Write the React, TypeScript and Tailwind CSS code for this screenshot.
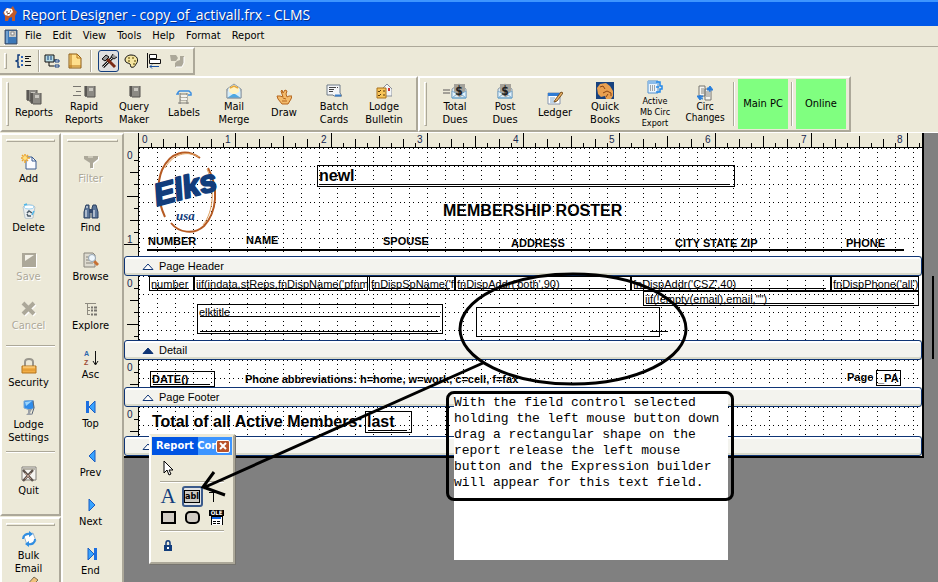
import type { ReactNode } from 'react';

const UI_FONT = "font-['DejaVu_Sans_Condensed','DejaVu_Sans',sans-serif]";
const REPORT_FONT = "font-['Liberation_Sans',sans-serif]";

interface IconProps {
  children: ReactNode;
  wide?: boolean;
}

const Icon = ({ children, wide }: IconProps) => (
  <svg
    className={wide ? 'h-4 w-6 shrink-0' : 'h-4 w-4 shrink-0'}
    viewBox={wide ? '0 0 24 16' : '0 0 16 16'}
    fill="none"
    aria-hidden="true"
  >
    {children}
  </svg>
);

const Notebook = () => (
  <g>
    <path d="M4 3h10v11H4z" fill="#77756f" />
    <path d="M6 3h8v11H6z" fill="#8c8a84" />
    <path d="M8 5h4v3H8z" fill="#c9c7c0" />
    <path d="M14 3v11H6" stroke="#55534e" />
    <path d="M3 4h3M3 6h3M3 8h3M3 10h3M3 12h3" stroke="#3c3b38" />
  </g>
);

const Envelope = ({ money }: { money?: boolean }) => (
  <g>
    <path d="M1 6l7-5 7 5v9H1z" fill="#dcebf5" stroke="#8f9aa3" />
    {money ? (
      <>
        <path d="M3 1h11v10l-5 3-6-3z" fill="#a5a29a" />
        <path d="M1 8l5 3-5 4zM15 8l-5 3 5 4z" fill="#e4f2fb" stroke="#7aa9cc" />
        <text x="8" y="12" textAnchor="middle" fontSize="12" fontWeight="bold" fill="#222">$</text>
        <path d="M1 15h14" stroke="#5da9dc" />
      </>
    ) : (
      <>
        <path d="M3 5l5-3 5 3v4l-5 3-5-3z" fill="#fff3c4" />
        <path d="M4 5l4-2 4 2" stroke="#e8a838" strokeWidth="1.5" />
        <path d="M1 8l7 4 7-4v7H1z" fill="#d5edfa" />
        <path d="M1 15l6-4h2l6 4z" fill="#4fa8e2" />
        <path d="M1 6v9h14V6" stroke="#8f9aa3" />
      </>
    )}
  </g>
);

const ReportsIcon = () => (
  <Icon>
    <g transform="translate(-3 -2)"><Notebook /></g>
    <g transform="translate(1 1)"><Notebook /></g>
  </Icon>
);

const RapidIcon = () => (
  <Icon wide>
    <path d="M1 3.5h8M4 8.5h5M1 12.5h8" stroke="#77756f" />
    <g transform="translate(9 0)"><Notebook /></g>
  </Icon>
);

const QueryIcon = () => <Icon><Notebook /></Icon>;

const LabelsIcon = () => (
  <Icon>
    <path d="M3 2h10l2 2v2h-3M3 2L1 5h2" stroke="#3d8fe0" strokeWidth="1.5" />
    <path d="M4 4v11M11 4v11M4 5h7M4 8h7M4 11h7M2 14h11" stroke="#807e78" />
    <path d="M5 6h6v2H5zM5 9h6v2H5z" fill="#f4f3ee" />
  </Icon>
);

const MailIcon = () => <Icon><Envelope /></Icon>;

const DrawIcon = () => (
  <Icon>
    <path
      d="M6 1l-1 1 2 6-3-1-3 0 1 3 4 5h6l3-5 1-3-3 0-2 1-1-3 1-3-2-1-2 3z"
      fill="#f3bb6c"
      stroke="#b5651d"
    />
    <path d="M7 9l3 1M6 12h5" stroke="#b5651d" />
  </Icon>
);

const BatchIcon = () => (
  <Icon>
    <path d="M1 2h13v8l2 3H8l-1-1H1z" fill="#f3f5f8" stroke="#6e7a87" />
    <path d="M3 4.5h7M3 6.5h5M3 8.5h4M11 4.5h1" stroke="#444" />
    <path d="M9 12.5h6" stroke="#3d7fc8" strokeWidth="2" />
  </Icon>
);

const BulletinIcon = () => (
  <Icon>
    <path d="M7 5l4-4 5 5v7H7z" fill="#f2f5f8" stroke="#8a8f96" />
    <path d="M12 5h2v3h-2z" fill="#c33" />
    <path d="M1 5h9v10H1z" fill="#f8c55a" stroke="#a8711c" />
    <path d="M2 8l1 1 2-2M2 12l1 1 2-2M7 8h2M7 12h2" stroke="#5a3b0c" />
  </Icon>
);

const TotalDuesIcon = () => (
  <Icon wide>
    <path d="M0 7h7M0 10h7" stroke="#8a8882" strokeWidth="1.5" />
    <g transform="translate(8 0)"><Envelope money /></g>
  </Icon>
);

const PostDuesIcon = () => <Icon><Envelope money /></Icon>;

const LedgerIcon = () => (
  <Icon>
    <path d="M1 4h12v11H1z" fill="#fff" stroke="#8796ad" />
    <path d="M1 4h12v3H1z" fill="#2f7bd3" />
    <path d="M3 9h5M3 11h4M3 13h6" stroke="#7aa7cf" />
    <path d="M8 11l6-8 2 1-6 8-3 1z" fill="#edb366" stroke="#79501e" />
  </Icon>
);

const QuickBooksIcon = () => (
  <svg className="h-[17px] w-[18px] shrink-0" viewBox="0 0 18 17" aria-hidden="true">
    <path d="M0 0h18v17H0z" fill="#17427f" />
    <path d="M1 6l3-4 6-1 4 3 3 5v5l-2 3h-5l-1-3-4 1-3-3z" fill="#e9a050" />
    <path d="M4 5l3-1 2 3M7 11l4-2 4 2v3M10 15l2-3" stroke="#8a4312" fill="none" />
  </svg>
);

const ExportIcon = () => (
  <Icon>
    <path d="M1 2h10v12H1z" fill="#eaf4fd" stroke="#4f8fd0" />
    <path d="M1 2h9v3H1z" fill="#8cbce9" />
    <path d="M3 7h1M5 7h1M7 7h1M3 9h1M5 9h1M7 9h1M3 11h1M5 11h1M7 11h1" stroke="#555" />
    <path d="M9 3h4v4h2v3h-2v3H9M12 8h-3" stroke="#2489ea" strokeWidth="1.5" />
  </Icon>
);

const CircIcon = () => (
  <Icon>
    <path d="M2 1h6v10H2zM8 4h6v11H8z" fill="#f5f5f0" stroke="#77756f" />
    <path d="M4 4h3M4 6h3M4 8h3M9 7h4M9 9h4M9 11h4" stroke="#8a8882" />
    <path d="M10 3c2 0 3 1 3 4M10 5l3-4 3 4zM6 14c-2 0-3-1-3-4M0 11l3 4 3-4z" fill="#287fdc" stroke="#287fdc" />
  </Icon>
);

const AddIcon = () => (
  <Icon>
    <path d="M5 3h6l4 4v8H5z" fill="#fbfcff" stroke="#395a8f" />
    <path d="M11 3v4h4" stroke="#395a8f" />
    <path d="M4 0v9M0 4h9M1 1l6 6M7 1L1 7" stroke="#eda52d" strokeWidth="1.5" />
    <circle cx="4" cy="4" r="2" fill="#ffe281" />
  </Icon>
);

const DeleteIcon = () => (
  <Icon>
    <path d="M2 4l2 11c2 1 6 1 8 0l2-11c-2-3-10-3-12 0z" fill="#e9edef" stroke="#b9c6cc" />
    <ellipse cx="8" cy="4" rx="5" ry="2" fill="#fff" stroke="#9fd3ef" />
    <path d="M6 10l2-2 3 2M10 13H7l-1-2" stroke="#4a5a66" strokeWidth="1.5" />
    <path d="M3 2l3-1M11 12l2-4" stroke="#4db6e8" strokeWidth="1.5" />
  </Icon>
);

const SaveIcon = () => (
  <Icon>
    <path d="M1 1h14v14H1z" fill="#aca899" />
    <path d="M4 3h9L4 9z" fill="#f4f2e8" />
    <path d="M15.5 2v13.5H2" stroke="#fff" />
  </Icon>
);

const CancelIcon = () => (
  <Icon>
    <path d="M3 3l11 11M14 3L3 14" stroke="#fff" strokeWidth="4" />
    <path d="M2 2l11 11M13 2L2 13" stroke="#aca899" strokeWidth="4" />
  </Icon>
);

const LockIcon = () => (
  <Icon>
    <path d="M4 8V4c0-4 8-4 8 0v4" stroke="#99968d" strokeWidth="2" />
    <path d="M1 8h14v7H1z" fill="#f2ae45" stroke="#b3731b" />
    <path d="M2 9h12" stroke="#ffdc97" />
    <path d="M2 12h12" stroke="#d9902c" />
  </Icon>
);

const LodgeIcon = () => (
  <Icon>
    <path d="M3 1l9-1 1 8-4 2-6-2z" fill="#2f8cea" stroke="#7ba9d4" />
    <path d="M4 2l7-1-6 5z" fill="#9cd5fc" />
    <path d="M7 9l4 0-2 4 3 2H5l2-2z" fill="#9ba1a8" />
    <path d="M12 1l1 7-2 6" stroke="#596573" />
  </Icon>
);

const QuitIcon = () => (
  <Icon>
    <path d="M1 1h14v13H1z" fill="#f6f5f1" stroke="#817f78" />
    <path d="M2 2h12v2H2z" fill="#b8b5aa" />
    <path d="M2 4l10 11M12 4L2 15" stroke="#5e544d" strokeWidth="2.5" />
    <path d="M4 7l6 6M10 7l-6 6" stroke="#b9988a" />
  </Icon>
);

const BulkIcon = () => (
  <Icon>
    <path d="M3 5l9-3 3 8-9 4z" fill="#fff" stroke="#9ab4cb" />
    <path d="M2 8c0-4 4-6 7-5M14 8c0 4-3 6-6 5" stroke="#2f8ee3" strokeWidth="2" />
    <path d="M8 0l4 3-4 3zM8 10l-4 3 4 3z" fill="#2f8ee3" />
  </Icon>
);

const PencilIcon = () => (
  <Icon>
    <path d="M2 14l1-4 8-9 4 3-9 9z" fill="#f0c27a" stroke="#7d6c52" />
  </Icon>
);

const FilterIcon = () => (
  <Icon>
    <path d="M2 3h14v3l-5 4v5H8v-5L2 5z" fill="#fff" />
    <path d="M1 2h14v3l-5 4v5H7V9L1 5z" fill="#aca899" />
    <path d="M5 3h5" stroke="#ece9d8" />
  </Icon>
);

const FindIcon = () => (
  <Icon>
    <path d="M3 2h3v3l1 4v6H1V9zM10 2h3l2 7v6H9V5z" fill="#5c7699" stroke="#283e5f" />
    <path d="M6 6h4v4H6z" fill="#33496c" />
    <path d="M3 7v7M11 7v7M4 3v2" stroke="#fff" />
  </Icon>
);

const BrowseIcon = () => (
  <Icon>
    <path d="M1 1h9l2 2v12H1z" fill="#dedbd0" stroke="#88857c" />
    <path d="M3 5h4M3 8h4M3 11h7" stroke="#88857c" />
    <path d="M11 9l4 4" stroke="#c77032" strokeWidth="3" />
    <circle cx="9" cy="6" r="3.5" fill="#eef6fc" stroke="#94a4b2" />
  </Icon>
);

const ExploreIcon = () => (
  <Icon>
    <path d="M2 2.5h11M4.5 3v11M5 6.5h2M5 9.5h2M5 13.5h2" stroke="#8e8b80" />
    <path d="M8 6.5h2M11 6.5h3M8 9.5h2M11 9.5h3M8 13.5h2M11 13.5h3" stroke="#77756f" strokeWidth="2" />
  </Icon>
);

const AscIcon = () => (
  <Icon>
    <text x="1" y="6" fontSize="7" fontWeight="bold" fill="#2d66ae" fontFamily="Liberation Sans">A</text>
    <text x="1" y="15" fontSize="7" fontWeight="bold" fill="#9c4934" fontFamily="Liberation Sans">Z</text>
    <path d="M12.5 1v13M10 11l2.5 4 2.5-4" stroke="#111" />
  </Icon>
);

const TopIcon = () => (
  <Icon>
    <path d="M3 2h3v12H3z" fill="#1c6fe0" />
    <path d="M12 2v12L6 8z" fill="#38a3ff" stroke="#1b5dc1" />
  </Icon>
);

const PrevIcon = () => (
  <Icon>
    <path d="M12 2v12L6 8z" fill="#38a3ff" stroke="#1b5dc1" />
  </Icon>
);

const NextIcon = () => (
  <Icon>
    <path d="M6 2v12l6-6z" fill="#38a3ff" stroke="#1b5dc1" />
  </Icon>
);

const EndIcon = () => (
  <Icon>
    <path d="M11 2h3v12h-3z" fill="#1c6fe0" />
    <path d="M5 2v12l6-6z" fill="#38a3ff" stroke="#1b5dc1" />
  </Icon>
);

interface ToolProps {
  icon?: ReactNode;
  lines: string[];
  disabled?: boolean;
}

const TopButton = ({ icon, lines }: ToolProps) => (
  <button type="button" className="flex w-[50px] shrink-0 flex-col items-center justify-center gap-px whitespace-nowrap">
    {icon}
    <span className={lines.length > 2 ? 'text-[9px] leading-[11px]' : 'text-[11px] leading-[13px]'}>
      {lines.map((line) => (
        <span key={line} className="block text-center">{line}</span>
      ))}
    </span>
  </button>
);

const SideButton = ({ icon, lines, disabled }: ToolProps) => (
  <button
    type="button"
    disabled={disabled}
    className="flex w-full shrink-0 flex-col items-center gap-0.5 pt-[9px] pr-1 pb-[9px] text-[11px] leading-[13px] disabled:text-[#aca899] disabled:[text-shadow:1px_1px_0_#fff]"
  >
    {icon}
    <span>
      {lines.map((line) => (
        <span key={line} className="block text-center">{line}</span>
      ))}
    </span>
  </button>
);

const VSep = () => <div className="mx-[3px] my-1 w-0.5 shrink-0 border-l border-r border-l-[#aca899] border-r-white" />;
const HSep = () => <div className="mx-1 h-0.5 shrink-0 border-t border-b border-t-[#aca899] border-b-white" />;
const SideGrip = () => <div className="mx-1 mt-1 h-[3px] shrink-0 border border-t-white border-l-white border-r-[#aca899] border-b-[#aca899]" />;
const TopGrip = () => <div className="my-1 ml-1 w-[3px] shrink-0 border border-t-white border-l-white border-r-[#aca899] border-b-[#aca899]" />;

const PANEL = 'border-2 border-t-white border-l-white border-r-[#aca899] border-b-[#aca899]';

const tickLength = (i: number) => {
  if (i % 8 === 0) return 14;
  if (i % 4 === 0) return 11;
  return i % 2 === 0 ? 8 : 4;
};

const HorizontalRuler = () => (
  <svg className={`block h-[15px] w-full ${REPORT_FONT}`} shapeRendering="crispEdges">
    {Array.from({ length: 65 }, (_, i) => i + 1).map((i) => (
      <rect key={i} x={15 + i * 12} y={14 - tickLength(i)} width="1" height={tickLength(i)} />
    ))}
    <rect x="14" y="14" width="100%" height="1" />
    <rect x="14" y="0" width="1" height="15" />
    {[0, 1, 2, 3, 4, 5, 6, 7, 8].map((n) => (
      <text key={n} x={n === 0 ? 18 : 5 + n * 96} y="10" fontSize="10" fill="#16264f">{n}</text>
    ))}
  </svg>
);

interface BandProps {
  label?: string;
  open?: boolean;
  heightClass: string;
  ticks: number;
  children: ReactNode;
}

const Band = ({ label, open, heightClass, ticks, children }: BandProps) => (
  <section>
    <div className={`flex ${heightClass} ${REPORT_FONT}`}>
      <svg className="block h-full w-[15px] shrink-0 bg-[#ece9d8]" shapeRendering="crispEdges">
        {Array.from({ length: ticks }, (_, i) => i + 1).map((i) => (
          <rect key={i} x={14 - tickLength(i)} y={i * 12} width={tickLength(i)} height="1" />
        ))}
        <rect x="14" width="1" height="100%" />
        <text x="3" y="11" fontSize="10" fill="#16264f">0</text>
        {ticks > 7 && <text x="3" y="95" fontSize="10" fill="#16264f">1</text>}
      </svg>
      <div className="relative flex-1 bg-white">
        <svg className="absolute inset-0 h-full w-full" shapeRendering="crispEdges">
          <rect width="100%" height="100%" fill="url(#grid-dots)" />
        </svg>
        {children}
      </div>
    </div>
    <div className="flex h-5 items-center gap-[5px] rounded-[3px] border border-[#0f3575] bg-[#f3f3ee] pl-[17px] shadow-[inset_0_2px_0_#fff,inset_0_-2px_0_#d9dacb]">
      <svg className="h-2 w-3" viewBox="0 0 12 8">
        <path d="M1 7.5h10L6 2z" fill={open ? '#0f3575' : '#fff'} stroke="#0f3575" />
      </svg>
      <span className={`text-[11px] ${REPORT_FONT}`}>{label}</span>
    </div>
  </section>
);

interface FieldProps {
  place: string;
  text?: string;
  className?: string;
  underline?: boolean;
}

const Field = ({ place, text, className = 'text-[11px] leading-[14px]', underline = true }: FieldProps) => (
  <div className={`absolute border border-black px-px whitespace-nowrap ${place} ${className}`}>
    {text}
    {underline && <span className="absolute right-1 bottom-px left-0.5 border-b border-black" />}
  </div>
);

const ElksLogo = () => (
  <svg className="absolute top-0.5 left-[13px] h-[84px] w-[70px] overflow-visible" viewBox="0 0 70 84" fill="none" role="img" aria-label="Elks usa">
    <path d="M48 8C34-2 18 2 10 20C5 32 5 50 13 67" stroke="#b65a22" strokeWidth="2" />
    <path d="M56 18C67 38 65 62 52 76C42 85 27 83 19 73" stroke="#b65a22" strokeWidth="2" />
    <path d="M47 7C35 0 21 4 13 18M55 19C63 37 62 61 51 75" stroke="#e0a261" />
    <text x="5" y="56" transform="rotate(-15 5 56)" fontFamily="Liberation Sans" fontStyle="italic" fontWeight="bold" fontSize="31" fill="#123d7c" stroke="#123d7c" strokeWidth="2" strokeLinejoin="round">Elks</text>
    <text x="24" y="70" fontFamily="Liberation Serif" fontStyle="italic" fontWeight="bold" fontSize="13" fill="#123d7c">usa</text>
  </svg>
);

const COLUMN_HEADS = [
  { text: 'NUMBER', place: 'left-[9px] top-[87px]' },
  { text: 'NAME', place: 'left-[107px] top-[86px]' },
  { text: 'SPOUSE', place: 'left-[244px] top-[87px]' },
  { text: 'ADDRESS', place: 'left-[372px] top-[89px]' },
  { text: 'CITY STATE ZIP', place: 'left-[536px] top-[89px]' },
  { text: 'PHONE', place: 'left-[707px] top-[89px]' },
];

const ReportPage = () => (
  <div className="w-[800px] border-r-2 border-b-2 border-black bg-[#ece9d8]">
    <svg className="absolute h-0 w-0">
      <defs>
        <pattern id="grid-dots" width="18" height="18" patternUnits="userSpaceOnUse">
          <path d="M0 0h1v1H0zM4 0h1v1H4zM9 0h1v1H9zM13 0h1v1h-1zM0 4h1v1H0zM0 9h1v1H0zM0 13h1v1H0z" fill="#000" />
        </pattern>
      </defs>
    </svg>
    <HorizontalRuler />

    <Band label="Page Header" heightClass="h-[108px]" ticks={8}>
      <ElksLogo />
      <Field place="left-[178px] top-[17px] h-[22px] w-[418px]" text="newl" className="text-base leading-5 font-bold" />
      <h2 className="absolute top-[53px] left-[304px] text-base leading-5 font-bold whitespace-nowrap">MEMBERSHIP ROSTER</h2>
      {COLUMN_HEADS.map(({ text, place }) => (
        <span key={text} className={`absolute text-[11px] leading-3 font-bold whitespace-nowrap ${place}`}>{text}</span>
      ))}
      <div className="absolute top-[101px] left-2 h-0.5 w-[757px] bg-black" />
    </Band>

    <Band label="Detail" open heightClass="h-16" ticks={5}>
      <Field place="left-[10px] top-0 h-[15px] w-[45px]" text="number" />
      <Field place="left-[55px] top-0 h-[15px] w-[174px]" text="iif(indata,stReps,fnDispName('pfnm" />
      <Field place="left-[230px] top-0 h-[15px] w-[86px]" text="fnDispSpName('f" />
      <Field place="left-[316px] top-0 h-[15px] w-[176px]" text="fnDispAddr('both',90)" />
      <Field place="left-[492px] top-0 h-[15px] w-[200px]" text="fnDispAddr('CSZ',40)" />
      <Field place="left-[692px] top-0 h-[15px] w-[88px]" text="fnDispPhone('all')" />
      <Field place="left-[504px] top-[15px] h-[15px] w-[276px]" text={'iif(!empty(email),email,"")'} />
      <Field place="left-[58px] top-[28px] h-[30px] w-[246px]" text="elktitle" />
      <div className="absolute top-10 left-[61px] w-[240px] border-t border-black" />
      <Field place="left-[337px] top-[31px] h-[30px] w-[184px]" underline={false} />
      <div className="absolute top-[55px] left-[511px] w-[18px] border-t border-black" />
    </Band>

    <Band label="Page Footer" heightClass="h-[27px]" ticks={2}>
      <Field place="left-[11px] top-[11px] h-4 w-[65px]" text="DATE()" className="text-[11px] leading-[14px] font-bold" />
      <span className="absolute top-3 left-[106px] text-[11px] leading-[14px] font-bold whitespace-nowrap">
        Phone abbreviations: h=home, w=work, c=cell, f=fax
      </span>
      <span className="absolute top-[10px] left-[708px] text-[11px] leading-[14px] font-bold">Page</span>
      <Field place="left-[737px] top-[10px] h-4 w-[25px]" text="_PA" className="text-[11px] leading-[14px] font-bold" underline={false} />
    </Band>

    <Band heightClass="h-[29px]" ticks={2}>
      <span className="absolute top-[5px] left-[13px] text-base leading-5 font-bold whitespace-nowrap">
        Total of all Active Members:
      </span>
      <Field place="left-[226px] top-1 h-[22px] w-[47px]" text="last" className="text-base leading-5 font-bold" />
    </Band>
  </div>
);

const ControlsPalette = () => (
  <div className="absolute top-[301px] left-[25px] w-[86px] border-2 border-t-[#ece9d8] border-l-white border-r-[#aca899] border-b-[#aca899] bg-[#ece9d8] px-px pt-px shadow-[1px_1px_0_#77756f]">
    <div className="flex h-[18px] items-center bg-[linear-gradient(90deg,#0054e3_0_58%,#3d95ff_58%)] pr-0.5 pl-1">
      <span className="flex-1 overflow-hidden text-[11px] font-bold whitespace-nowrap text-white">Report Controls</span>
      <button type="button" aria-label="Close" className="flex h-[13px] w-[14px] shrink-0 items-center justify-center rounded-[2px] border border-white bg-[#b9532b]">
        <svg className="h-2 w-2" viewBox="0 0 8 8"><path d="M1 1l6 6M7 1L1 7" stroke="#fff" strokeWidth="2" /></svg>
      </button>
    </div>
    <div className="px-1 pb-1.5">
      <button type="button" aria-label="Select" className="flex h-[26px] w-6 items-center justify-center">
        <svg className="h-4 w-4" viewBox="0 0 16 16">
          <path d="M4 1v12l3-3 2 5 2-1-2-4h4z" fill="#fff" stroke="#000" />
        </svg>
      </button>
      <HSep />
      <div className="mt-[3px] grid grid-cols-3 justify-items-center">
        <button type="button" aria-label="Label" className="h-[21px] w-[22px] font-['Liberation_Serif',serif] text-[21px] leading-[21px] text-[#123d7c]">A</button>
        <button type="button" aria-label="Field" className="flex h-[21px] w-[21px] items-center justify-center rounded-[3px] border-2 border-[#3b5a8b] bg-[#e2e3e4]">
          <span className="border border-black bg-[#ccc9c2] text-[9px] leading-[11px] font-bold">abl</span>
        </button>
        <button type="button" aria-label="Line" className="flex h-[21px] w-[22px] items-center justify-center">
          <svg className="h-4 w-4" viewBox="0 0 16 16"><path d="M1 3.5h10M5.5 4v9" stroke="#000" /></svg>
        </button>
        <button type="button" aria-label="Rectangle" className="flex h-5 w-[22px] items-center justify-center">
          <span className="h-[13px] w-[15px] border-2 border-black bg-[#d1ccc4]" />
        </button>
        <button type="button" aria-label="Rounded rectangle" className="flex h-5 w-[22px] items-center justify-center">
          <span className="h-[13px] w-[15px] rounded-[5px] border-2 border-black bg-[#d1ccc4]" />
        </button>
        <button type="button" aria-label="OLE object" className="flex h-5 w-[22px] items-center justify-center">
          <svg className="h-[15px] w-[15px]" viewBox="0 0 15 15" shapeRendering="crispEdges">
            <path d="M0 0h15v6H0z" />
            <text x="7.5" y="5" textAnchor="middle" fontSize="6" fontWeight="bold" fill="#fff">OLE</text>
            <path d="M2 6h11v9H2z" fill="#fff" stroke="#000" />
            <path d="M3 7h9v2H3z" fill="#1267e8" />
            <path d="M4 11h3M8 11h3M4 13h3M8 13h3" stroke="#000" />
          </svg>
        </button>
      </div>
      <div className="mt-[3px]"><HSep /></div>
      <button type="button" aria-label="Lock" className="mt-1 flex h-5 w-6 items-center justify-center">
        <svg className="h-3 w-2" viewBox="0 0 8 12">
          <path d="M2 6V3c0-3 4-3 4 0v3" fill="none" stroke="#123d7c" strokeWidth="1.5" />
          <path d="M0 5h8v6H0z" fill="#123d7c" />
          <path d="M3 7h2v2H3z" fill="#fff" />
        </svg>
      </button>
    </div>
  </div>
);

const Annotation = () => (
  <>
    <div className="absolute top-[261px] left-[330px] h-[166px] w-[274px] bg-white">
      <p className="pt-px font-['Liberation_Mono',monospace] text-[13px] leading-4 whitespace-pre">
        {`With the field control selected
holding the left mouse button down
drag a rectangular shape on the
report release the left mouse
button and the Expression builder
will appear for this text field.`}
      </p>
    </div>
    <div className="absolute top-[258px] left-[322px] h-[110px] w-[288px] rounded-lg border-3 border-black" />
    <svg className="pointer-events-none absolute inset-0 h-full w-full" fill="none" stroke="#000" strokeWidth="3">
      <ellipse cx="449" cy="196" rx="113" ry="55" />
      <path d="M359 230L79 355M90 339l-11 15 22 8" />
    </svg>
    <div className="absolute top-[143px] left-[808px] h-[83px] w-0.5 bg-black" />
  </>
);

const TitleBar = () => (
  <header className="flex h-[26px] shrink-0 items-center gap-1 border-t-2 border-[#3d95ff] bg-[#0058e8] pl-0.5">
    <Icon>
      <path d="M1 7l3-5 4 1 3-3 2 4 2 2-2 4v5h-3v-4l-3 1-1 3H3v-5z" fill="#c05a2a" />
      <path d="M2 6l3-4 5 1 1 3-4 4-4-1z" fill="#fff" />
      <path d="M4 6h2M8 5h1M5 8l3-1" stroke="#6c3f28" />
    </Icon>
    <h1 className="font-['Open_Sans','Noto_Sans',sans-serif] text-[14px] whitespace-nowrap text-white [text-shadow:1px_1px_0_#0b2f86]">
      Report Designer - copy_of_activall.frx - CLMS
    </h1>
  </header>
);

const MenuBar = () => (
  <nav className="flex h-5 shrink-0 items-center gap-[11px] pt-px pl-1 text-[11px]">
    <svg className="-mr-1 h-4 w-[14px] bg-white" viewBox="0 0 14 16">
      <path d="M1 1h12v14H1z" fill="#3c78b8" stroke="#3c4654" />
      <path d="M5 2h7v6H5z" fill="#c8c8c4" />
      <path d="M7 3h3v3H7z" fill="#fff" stroke="#888" />
      <path d="M3 2v12" stroke="#a8cbe8" />
    </svg>
    {['File', 'Edit', 'View', 'Tools', 'Help', 'Format', 'Report'].map((item) => (
      <button key={item} type="button">{item}</button>
    ))}
  </nav>
);

const SMALL = 'flex w-[23px] items-center justify-center';

const DesignerToolbar = () => (
  <div className={`flex h-7 w-[195px] shrink-0 ${PANEL} border-l-0`}>
    <TopGrip />
    <div className="flex py-px pl-1">
      <button type="button" aria-label="Tab order" className={SMALL}>
        <Icon>
          <path d="M5 2H3v5L1 8l2 1v5h2" stroke="#123d7c" strokeWidth="1.5" />
          <path d="M6 4h2M6 8h2M6 12h2" stroke="#2c62b5" strokeWidth="2" />
          <path d="M10 3.5h6M10 5.5h4M10 8.5h6M10 12.5h6" stroke="#111" />
        </Icon>
      </button>
      <div className="ml-1"><div className="h-full w-0.5 border-l border-r border-l-[#aca899] border-r-white" /></div>
      <button type="button" aria-label="Data environment" className={SMALL}>
        <Icon>
          <path d="M1 2h9v7H1z" fill="#b7dce4" stroke="#111" />
          <path d="M3 4h2M6 4h2M3 6h2M6 6h2" stroke="#123d7c" />
          <path d="M5 9v4h5M10 7h3" stroke="#111" />
          <path d="M11 7h4v2h-4zM11 12h4v2h-4z" fill="#f4f4f4" stroke="#123d7c" />
        </Icon>
      </button>
      <button type="button" aria-label="Page setup" className={SMALL}>
        <Icon>
          <path d="M2 1h8l4 4v10H2z" fill="#ffe08c" stroke="#8a5b16" />
          <path d="M4 1v14M2 13h12M10 1v4h4" stroke="#b87718" />
        </Icon>
      </button>
      <div className="mr-1.5 ml-1"><div className="h-full w-0.5 border-l border-r border-l-[#aca899] border-r-white" /></div>
      <button type="button" aria-label="Report controls" aria-pressed="true" className="flex w-[21px] items-center justify-center rounded-[3px] border border-[#123d7c] bg-[#dfdfdf]">
        <Icon>
          <path d="M2 14l9-9" stroke="#111" strokeWidth="3" />
          <path d="M2 14l9-9" stroke="#d7d7d7" />
          <path d="M14 14L6 6" stroke="#7b2b15" strokeWidth="3" />
          <path d="M1 6l4-4 3 2-4 4zM12 1l-2 3 3 2 3-2" fill="#999" stroke="#111" />
        </Icon>
      </button>
      <button type="button" aria-label="Color palette" className={SMALL}>
        <Icon>
          <path d="M8 2c7 0 8 6 5 9-1 2-2 4-5 3-1-1 0-2-1-3S2 10 2 7s3-5 6-5z" fill="#f5e5a1" stroke="#111" />
          <path d="M5 5h2M9 5h2M11 8h2M5 8h2M10 11h2" stroke="#8a7a32" strokeWidth="1.5" />
        </Icon>
      </button>
      <button type="button" aria-label="Layout" className={SMALL}>
        <Icon>
          <path d="M1.5 0v15" stroke="#111" />
          <path d="M3.5 1.5h7v4h-7zM3.5 6.5h11v4h-11z" fill="#fff" stroke="#111" />
          <path d="M4 13.5h9M6 11.5l-2 2 2 2" stroke="#1b54a6" />
        </Icon>
      </button>
      <button type="button" aria-label="Style" disabled className={SMALL}>
        <Icon>
          <path d="M1 2h6l2 3-2 3H2zM8 8l3-1V3h4v7l-2 4H6v-4z" fill="#aca899" />
          <path d="M15 4v6l-2 4H7" stroke="#fff" />
        </Icon>
      </button>
    </div>
  </div>
);

export default function App() {
  return (
    <div className={`flex h-screen flex-col overflow-hidden bg-[#ece9d8] text-black ${UI_FONT}`}>
      <TitleBar />
      <MenuBar />
      <div className="shrink-0 border-t border-[#aca899] pb-px">
        <DesignerToolbar />
      </div>

      <div className="flex h-14 shrink-0">
        <div className={`flex w-[418px] shrink-0 ${PANEL}`}>
          <TopGrip />
          <div className="flex">
            <TopButton icon={<ReportsIcon />} lines={['Reports']} />
            <TopButton icon={<RapidIcon />} lines={['Rapid', 'Reports']} />
            <TopButton icon={<QueryIcon />} lines={['Query', 'Maker']} />
            <TopButton icon={<LabelsIcon />} lines={['Labels']} />
            <TopButton icon={<MailIcon />} lines={['Mail', 'Merge']} />
            <TopButton icon={<DrawIcon />} lines={['Draw']} />
            <TopButton icon={<BatchIcon />} lines={['Batch', 'Cards']} />
            <TopButton icon={<BulletinIcon />} lines={['Lodge', 'Bulletin']} />
          </div>
        </div>
        <div className={`flex w-[433px] shrink-0 ${PANEL}`}>
          <TopGrip />
          <div className="flex pl-[3px]">
            <TopButton icon={<TotalDuesIcon />} lines={['Total', 'Dues']} />
            <TopButton icon={<PostDuesIcon />} lines={['Post', 'Dues']} />
            <TopButton icon={<LedgerIcon />} lines={['Ledger']} />
            <TopButton icon={<QuickBooksIcon />} lines={['Quick', 'Books']} />
            <TopButton icon={<ExportIcon />} lines={['Active', 'Mb Circ', 'Export']} />
            <button type="button" className="flex w-[50px] shrink-0 flex-col items-center justify-center text-[10px] leading-[11px]">
              <CircIcon />
              <span>Circ</span>
              <span>Changes</span>
            </button>
          </div>
          <VSep />
          <button type="button" className="my-px w-[50px] shrink-0 bg-[#80ff80] text-[11px] whitespace-nowrap">Main PC</button>
          <VSep />
          <button type="button" className="my-px w-[50px] shrink-0 bg-[#80ff80] text-[11px]">Online</button>
        </div>
      </div>

      <div className="flex min-h-0 flex-1">
        <aside className="flex w-[61px] shrink-0 flex-col gap-px pt-px">
          <div className={`flex flex-col ${PANEL}`}>
            <SideGrip />
            <div className="flex flex-col pt-[3px]">
              <SideButton icon={<AddIcon />} lines={['Add']} />
              <SideButton icon={<DeleteIcon />} lines={['Delete']} />
              <SideButton icon={<SaveIcon />} lines={['Save']} disabled />
              <SideButton icon={<CancelIcon />} lines={['Cancel']} disabled />
            </div>
            <div className="mt-1 pb-0.5"><HSep /></div>
            <SideButton icon={<LockIcon />} lines={['Security']} />
            <div className="-mt-[7px] -mb-0.5">
              <SideButton icon={<LodgeIcon />} lines={['Lodge', 'Settings']} />
            </div>
            <HSep />
            <div className="pt-1 pb-2">
              <SideButton icon={<QuitIcon />} lines={['Quit']} />
            </div>
          </div>
          <div className={`flex flex-1 flex-col overflow-hidden ${PANEL} border-b-0`}>
            <SideGrip />
            <div className="-mt-1 -mb-2 flex flex-col">
              <SideButton icon={<BulkIcon />} lines={['Bulk', 'Email']} />
            </div>
            <button type="button" aria-label="Compose" className="mx-auto shrink-0"><PencilIcon /></button>
          </div>
        </aside>
        <aside className="flex w-[63px] shrink-0 pt-px">
          <div className={`flex flex-1 flex-col overflow-hidden ${PANEL} border-b-0`}>
            <SideGrip />
            <div className="flex flex-col pt-[3px]">
              <SideButton icon={<FilterIcon />} lines={['Filter']} disabled />
              <SideButton icon={<FindIcon />} lines={['Find']} />
              <SideButton icon={<BrowseIcon />} lines={['Browse']} />
              <SideButton icon={<ExploreIcon />} lines={['Explore']} />
              <SideButton icon={<AscIcon />} lines={['Asc']} />
              <SideButton icon={<TopIcon />} lines={['Top']} />
              <SideButton icon={<PrevIcon />} lines={['Prev']} />
              <SideButton icon={<NextIcon />} lines={['Next']} />
              <SideButton icon={<EndIcon />} lines={['End']} />
            </div>
          </div>
        </aside>
        <main className="relative min-w-0 flex-1 overflow-hidden border-t border-white bg-[#808080]">
          <ReportPage />
          <ControlsPalette />
          <Annotation />
        </main>
      </div>
    </div>
  );
}
